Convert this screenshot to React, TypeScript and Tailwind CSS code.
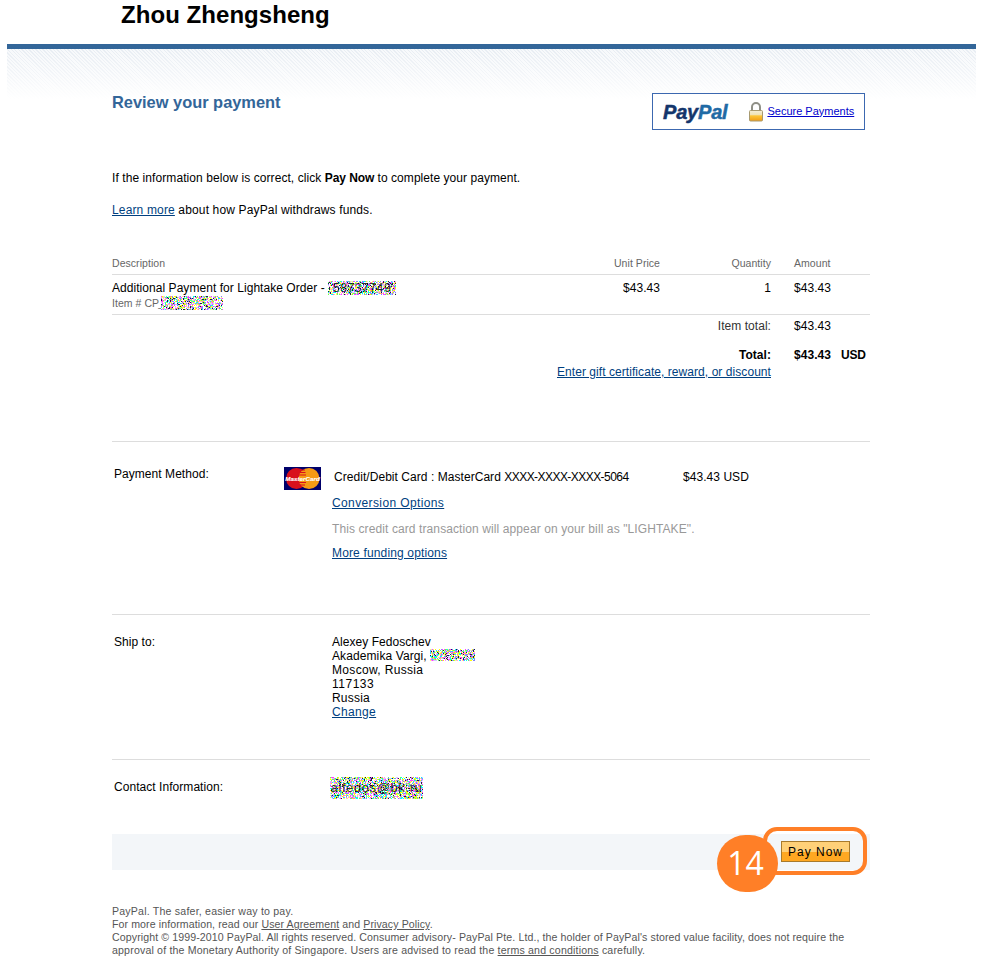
import React from "react";

function Noise({ w, h, seed, text, size = 12 }: { w: number; h: number; seed: number; text?: string; size?: number }) {
  const palette = ["#ffffff", "#ffffff", "#ffffff", "#ff40ff", "#ffff00", "#ffff60", "#00ffff", "#60ff60", "#8080ff", "#d0d0ff", "#ff90ff", "#202040"];
  const rects: React.ReactNode[] = [];
  let s = seed;
  for (let y = 0; y < h; y++) {
    for (let x = 0; x < w; x++) {
      s = (s * 1664525 + 1013904223) >>> 0;
      const c = palette[(s >>> 24) % palette.length];
      rects.push(<rect key={x + "-" + y} x={x} y={y} width={1} height={1} fill={c} />);
    }
  }
  return (
    <span className="relative inline-block align-top shrink-0" style={{ width: w, height: h }}>
      <svg width={w} height={h} className="block" shapeRendering="crispEdges">
        {rects}
      </svg>
      {text && (
        <span className="absolute inset-0 flex items-center justify-center tracking-[0.6px] text-black/80 whitespace-nowrap" style={{ fontSize: size }}>
          {text}
        </span>
      )}
    </span>
  );
}

function PayPalLogo() {
  return (
    <span className="text-[20px] leading-none font-bold italic tracking-[-0.2px]">
      <span className="text-[#14356b] [-webkit-text-stroke:0.5px_#14356b]">Pay</span>
      <span className="text-[#1f6aa5] [-webkit-text-stroke:0.5px_#1f6aa5]">Pal</span>
    </span>
  );
}

function Lock() {
  return (
    <svg width="16" height="20" viewBox="0 0 16 20" className="block">
      <defs>
        <linearGradient id="lockBody" x1="0" y1="0" x2="0" y2="1">
          <stop offset="0" stopColor="#f4eed8" />
          <stop offset="0.42" stopColor="#efe2b4" />
          <stop offset="0.5" stopColor="#fcc63a" />
          <stop offset="1" stopColor="#f29c14" />
        </linearGradient>
      </defs>
      <path d="M4 9V5a4 4 0 0 1 8 0V9" fill="none" stroke="#8f8f86" strokeWidth="2" />
      <rect x="1.5" y="8.5" width="13" height="10.5" rx="1" fill="url(#lockBody)" stroke="#a89a70" strokeWidth="1" />
    </svg>
  );
}

function MasterCard() {
  return (
    <svg width="37" height="23" viewBox="0 0 37 23" className="block">
      <rect width="37" height="23" fill="#00006a" />
      <circle cx="12.5" cy="11.5" r="10.5" fill="#d8101c" />
      <circle cx="25" cy="11.5" r="10.5" fill="#f59a14" />
      <path d="M17 3h4M15.5 5.5h6M15 8h7M15 15.5h7M16 18h5" stroke="#d8101c" strokeWidth="1.2" />
      <text x="18.5" y="14" textAnchor="middle" fontFamily="Liberation Sans, sans-serif" fontSize="6.2" fontWeight="700" fontStyle="italic" fill="#ffffff" stroke="#ffffff" strokeWidth="0.15">
        MasterCard
      </text>
    </svg>
  );
}

const A = ({ children, className = "" }: { children: React.ReactNode; className?: string }) => (
  <a href="#" className={"text-[#003f7f] underline " + className}>
    {children}
  </a>
);

export default function App() {
  return (
    <div className="relative w-[982px] h-[962px] overflow-hidden bg-white font-['Liberation_Sans',Arial,sans-serif] text-[12px] leading-[14px] tracking-[0.05px] text-black">
      <div className="h-[44px] pl-[121px] pt-[1px] text-[24px] leading-[28px] font-bold tracking-[0.05px]">Zhou Zhengsheng</div>
      <div className="ml-[7px] w-[969px] h-[5px] bg-[#336699]" />

      <div className="ml-[7px] w-[969px] pl-[105px] bg-no-repeat bg-[length:100%_50px] bg-[linear-gradient(to_bottom,rgba(255,255,255,0),#ffffff),repeating-linear-gradient(45deg,#e8edf3_0px,#e8edf3_1px,#f7f9fb_1px,#f7f9fb_2.5px)]">
        <div className="w-[758px]">
          <div className="flex justify-between h-[122px] pt-[44px] pr-[5px]">
            <h1 className="text-[16.4px] leading-[18px] font-bold tracking-normal text-[#336699]">Review your payment</h1>
            <div className="flex h-[37px] w-[213px] items-center border border-[#3c68b0] bg-white pl-[10px]">
              <PayPalLogo />
              <span className="ml-[21px] mr-[3px]">
                <Lock />
              </span>
              <a href="#" className="pb-[2px] text-[11px] tracking-normal text-[#0000cc] underline">Secure Payments</a>
            </div>
          </div>

          <p>
            <span className="tracking-[0.08px]">If the information below is correct, click </span>
            <b className="tracking-[-0.1px]">Pay Now</b> to complete your payment.
          </p>
          <p className="mt-[18px] tracking-[0.15px]">
            <A>Learn more</A> about how PayPal withdraws funds.
          </p>

          <div className="mt-[40px] grid grid-cols-[438px_110px_111px_23px_47px_1fr] border-b border-[#dddddd] pb-[5px] text-[10.5px] leading-[12px] text-[#666666]">
            <div>Description</div>
            <div className="text-right">Unit Price</div>
            <div className="text-right">Quantity</div>
            <div />
            <div>Amount</div>
          </div>

          <div className="grid grid-cols-[438px_110px_111px_23px_47px_1fr] border-b border-[#dddddd] pt-[6px] pb-[4px]">
            <div>
              <div className="flex whitespace-pre">
                Additional Payment for Lightake Order - <Noise w={68} h={14} seed={11} text="58737749" />
              </div>
              <div className="mt-[1px] flex whitespace-pre text-[10.5px] text-[#666666]">
                Item # CP<span className="-ml-[1px] w-[3px]">_</span>
                <Noise w={62} h={14} seed={29} />
              </div>
            </div>
            <div className="text-right">$43.43</div>
            <div className="text-right">1</div>
            <div />
            <div>$43.43</div>
          </div>

          <div className="grid grid-cols-[438px_110px_111px_23px_47px_1fr] pt-[4px]">
            <div className="col-span-3 text-right text-[#333333]">Item total:</div>
            <div />
            <div>$43.43</div>
          </div>
          <div className="mt-[15px] grid grid-cols-[438px_110px_111px_23px_47px_1fr] font-bold">
            <div className="col-span-3 text-right">Total:</div>
            <div />
            <div>$43.43</div>
            <div className="tracking-[-0.2px]">USD</div>
          </div>
          <div className="mt-[3px] w-[659px] text-right tracking-[0.06px]">
            <A>Enter gift certificate, reward, or discount</A>
          </div>

          <div className="mt-[62px] border-t border-[#dddddd] grid grid-cols-[172px_48px_1fr] h-[173px] pt-[25px]">
            <div className="pl-[2px]">Payment Method:</div>
            <div>
              <MasterCard />
            </div>
            <div>
              <div className="pt-[3px] pl-[2px] flex whitespace-pre">
                <span className="w-[349px]">
                  <span>Credit/Debit Card : MasterCard </span>
                  <span className="tracking-[-0.55px]">XXXX-XXXX-XXXX-5064</span>
                </span>
                <span>$43.43 USD</span>
              </div>
              <div className="mt-[12px] tracking-[0.38px]">
                <A>Conversion Options</A>
              </div>
              <div className="mt-[12px] tracking-[0.1px] text-[#999999]">This credit card transaction will appear on your bill as "LIGHTAKE".</div>
              <div className="mt-[10px] tracking-[0.15px]">
                <A>More funding options</A>
              </div>
            </div>
          </div>

          <div className="border-t border-[#dddddd] grid grid-cols-[220px_1fr] h-[145px] pt-[20px]">
            <div className="pl-[2px]">Ship to:</div>
            <div>
              <div>Alexey Fedoschev</div>
              <div className="flex whitespace-pre tracking-[0.1px]">
                Akademika Vargi, <Noise w={45} h={12} seed={53} />
              </div>
              <div className="tracking-[0.33px]">Moscow, Russia</div>
              <div className="tracking-[0.5px]">117133</div>
              <div className="tracking-[0.2px]">Russia</div>
              <div className="tracking-[0.35px]">
                <A>Change</A>
              </div>
            </div>
          </div>

          <div className="border-t border-[#dddddd] grid grid-cols-[218px_1fr] h-[75px] pt-[17px]">
            <div className="pl-[2px] pt-[3px]">Contact Information:</div>
            <div>
              <Noise w={93} h={22} seed={71} text="alfedos@bk.ru" size={13} />
            </div>
          </div>

          <div className="flex h-[36px] justify-end bg-[#f3f6f9] pt-[7px] pr-[20px]">
            <button className="h-[21px] w-[69px] border border-[#a87a2c] bg-[linear-gradient(to_bottom,#ffd078_0%,#ffd078_50%,#ffa822_50%,#ffa822_100%)] text-[12px] leading-[14px] tracking-[1px] text-black">
              Pay Now
            </button>
          </div>

          <div className="mt-[35px] whitespace-nowrap text-[10.6px] leading-[13px] tracking-[0.09px] text-[#555555]">
            <div className="tracking-[0.2px]">PayPal. The safer, easier way to pay.</div>
            <div>
              For more information, read our <u>User Agreement</u> and <u>Privacy Policy</u>.
            </div>
            <div className="tracking-[0.1px]">Copyright © 1999-2010 PayPal. All rights reserved. Consumer advisory- PayPal Pte. Ltd., the holder of PayPal's stored value facility, does not require the</div>
            <div className="tracking-[0.17px]">
              approval of the Monetary Authority of Singapore. Users are advised to read the <u>terms and conditions</u> carefully.
            </div>
          </div>
        </div>
      </div>

      <div className="absolute left-[763px] top-[827px] h-[48px] w-[104px] rounded-[14px] border-[4px] border-[#ff7f27]" />
      <div className="absolute left-[717px] top-[835px] flex h-[57px] w-[61px] items-center justify-center rounded-full bg-[#ff7f27] pr-[4px] pb-[2px] font-['Open_Sans',sans-serif] text-[32px] leading-none tracking-normal text-white">
        14
      </div>
    </div>
  );
}
